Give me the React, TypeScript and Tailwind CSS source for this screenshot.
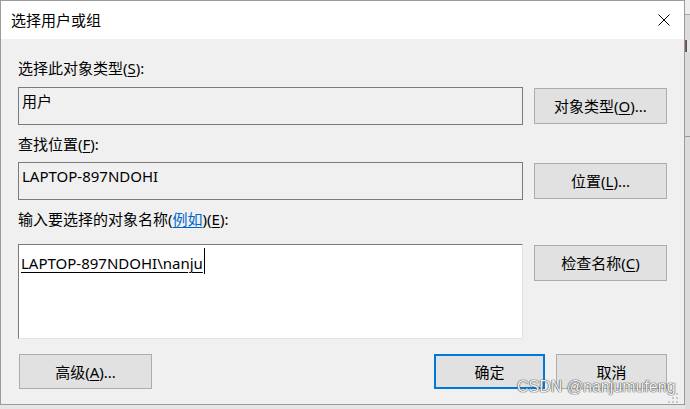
import React from "react";

const font = "font-['Noto_Sans','Noto_Sans_CJK_SC',sans-serif]";

const Key = ({ k }: { k: string }) => <span className="underline underline-offset-[2px]">{k}</span>;

const Btn = ({ children, primary = false, className = "" }: { children: React.ReactNode; primary?: boolean; className?: string }) => (
  <button
    className={
      "flex items-center justify-center bg-[#e1e1e1] text-[15px] leading-[20px] text-black " +
      (primary ? "border-2 border-[#0078d7] " : "border border-[#adadad] ") +
      className
    }
  >
    {children}
  </button>
);

const ReadBox = ({ text }: { text: string }) => (
  <div className="h-[38px] border border-[#7a7a7a] bg-[#f0f0f0] pl-[3px] pt-[3px] text-[15px] leading-[20px] text-black">
    {text}
  </div>
);

const Label = ({ children, className = "" }: { children: React.ReactNode; className?: string }) => (
  <div className={"col-span-2 text-[15px] leading-[20px] text-black " + className}>{children}</div>
);

export default function App() {
  return (
    <div className={"relative flex h-[409px] w-[690px] overflow-hidden bg-[#e6e6e6] " + font}>
      {/* dialog */}
      <div className="flex h-[405px] w-[685px] shrink-0 flex-col border border-[#9b9b9b] bg-[#f0f0f0]">
        <div className="flex h-[38px] items-center justify-between bg-white pl-[10px] pr-[14px]">
          <span className="text-[15px] leading-[20px] text-black">选择用户或组</span>
          <svg width="12" height="12" viewBox="0 0 12 12">
            <path d="M0.5 0.5 L11.5 11.5 M11.5 0.5 L0.5 11.5" stroke="#000" strokeWidth="1" />
          </svg>
        </div>

        <div className="grid grid-cols-[505px_133px] gap-x-[11px] pl-[17px] pt-[19px]">
          <Label>
            选择此对象类型(<Key k="S" />):
          </Label>
          <div className="mt-[9px]">
            <ReadBox text="用户" />
          </div>
          <Btn className="mt-[10px] h-[36px]">
            对象类型(<Key k="O" />)...
          </Btn>

          <Label className="mt-[9px]">
            查找位置(<Key k="F" />):
          </Label>
          <div className="mt-[8px]">
            <ReadBox text="LAPTOP-897NDOHI" />
          </div>
          <Btn className="mt-[9px] h-[36px]">
            位置(<Key k="L" />)...
          </Btn>

          <Label className="mt-[9px]">
            输入要选择的对象名称(<span className="text-[#0066cc] underline underline-offset-[2px]">例如</span>)(<Key k="E" />):
          </Label>
          <div className="mt-[15px] h-[95px] border border-t-[#7a7a7a] border-l-[#7a7a7a] border-r-[#e3e3e3] border-b-[#e3e3e3] bg-white pl-[2px] pt-[8px] text-[15px] leading-[20px] text-black">
            <span className="relative underline underline-offset-[3px]">
              LAPTOP-897NDOHI\nanju
              <span className="absolute right-[-2px] top-[-5px] h-[26px] w-px bg-black" />
            </span>
          </div>
          <Btn className="mt-[16px] h-[36px] self-start">
            检查名称(<Key k="C" />)
          </Btn>

          <div className="col-span-2 mt-[15px] flex h-[35px] items-stretch pl-px">
            <Btn className="w-[133px]">
              高级(<Key k="A" />)...
            </Btn>
            <div className="flex-1" />
            <Btn primary className="w-[111px]">
              确定
            </Btn>
            <Btn className="ml-[11px] w-[111px]">取消</Btn>
          </div>
        </div>
      </div>

      {/* window behind, right edge */}
      <div className="flex w-[5px] flex-col">
        <div className="h-[15px] border-b border-[#a8a8a8] bg-[#eeeeee]" />
        <div className="h-[25px] bg-[#dcdcdc]" />
        <div className="h-[12px] w-[2px] bg-[linear-gradient(90deg,#c06000,#1a4fa0)]" />
        <div className="h-[84px] bg-[#dcdcdc]" />
        <div className="h-px bg-[#9a9a9a]" />
        <div className="flex-1 bg-[#dcdcdc]" />
      </div>

      {/* watermark */}
      <div className="absolute left-[517px] top-[377px] font-['Liberation_Sans',sans-serif] text-[16px] leading-[20px] text-[#f2f2f2] [text-shadow:0_0_1px_#555,0_0_1px_#555,0_0_1px_#555]">
        CSDN @nanjumufeng
      </div>
      <svg className="absolute left-[668px] top-[393px]" width="12" height="10" viewBox="0 0 12 10">
        <rect x="8" y="0" width="2" height="2" fill="#c8c8c8" />
        <rect x="4" y="4" width="2" height="2" fill="#c8c8c8" />
        <rect x="8" y="4" width="2" height="2" fill="#c8c8c8" />
        <rect x="0" y="8" width="2" height="2" fill="#c8c8c8" />
        <rect x="4" y="8" width="2" height="2" fill="#c8c8c8" />
        <rect x="8" y="8" width="2" height="2" fill="#c8c8c8" />
      </svg>
    </div>
  );
}
